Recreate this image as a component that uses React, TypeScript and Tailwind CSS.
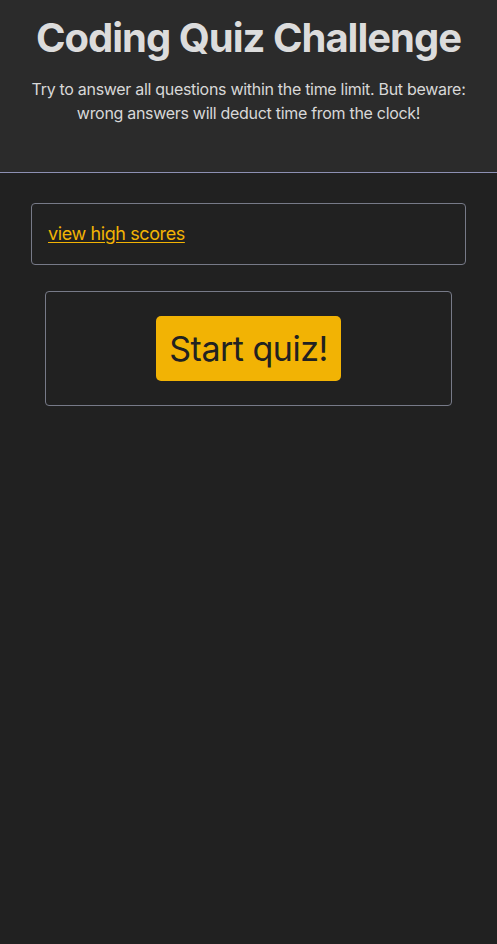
import React from 'react'

const font = { fontFamily: 'Inter, "Noto Sans", sans-serif' }

export default function App() {
  return (
    <div className="min-h-[944px] bg-[#212121] text-[#dedede]" style={font}>
      <header className="bg-[#2b2b2b] border-b border-[#8d90b3] px-4 pt-[14px] pb-[47px] text-center">
        <h1 className="text-[40px] leading-[48px] font-bold tracking-[-1px] text-[#dcdcdc]">
          Coding Quiz Challenge
        </h1>
        <p className="mt-[15px] text-base leading-6 tracking-[-0.3px] text-[#d8d8d8]">
          Try to answer all questions within the time limit. But beware: wrong answers will deduct
          time from the clock!
        </p>
      </header>

      <main className="pt-[30px]">
        <div className="mx-[31px] rounded border border-[#777a88] px-4 py-4">
          <a
            href="#"
            className="text-[18px] leading-7 tracking-[-0.4px] text-[#f2b304] underline underline-offset-2"
          >
            view high scores
          </a>
        </div>

        <div className="mx-[45px] mt-[26px] flex justify-center rounded border border-[#777a88] py-6">
          <button className="h-[65px] rounded-[5px] bg-[#f2b304] px-[13px] text-[34px] leading-none tracking-[-0.5px] text-[#212121]">
            Start quiz!
          </button>
        </div>
      </main>
    </div>
  )
}
